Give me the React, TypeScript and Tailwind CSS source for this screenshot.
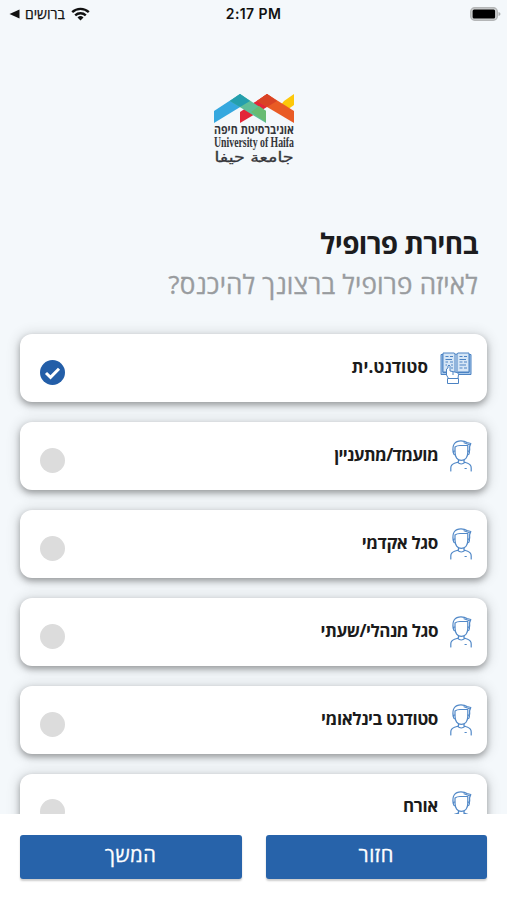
import { useState } from "react";

type IconName = "book" | "person";

interface Profile {
  id: string;
  label: string;
  icon: IconName;
  tracking: string;
}

const profiles: Profile[] = [
  { id: "student", label: "סטודנט.ית", icon: "book", tracking: "tracking-[0.05px]" },
  { id: "candidate", label: "מועמד/מתעניין", icon: "person", tracking: "tracking-[-0.65px]" },
  { id: "academic", label: "סגל אקדמי", icon: "person", tracking: "tracking-[-0.4px]" },
  { id: "staff", label: "סגל מנהלי/שעתי", icon: "person", tracking: "tracking-[-0.5px]" },
  { id: "international", label: "סטודנט בינלאומי", icon: "person", tracking: "tracking-[-0.4px]" },
  { id: "guest", label: "אורח", icon: "person", tracking: "tracking-[-0.35px]" },
];

const button =
  "h-[44px] flex-1 rounded-[3px] bg-[#2763aa] pb-[5px] text-[20px] leading-[39px] tracking-[0.6px] text-white [-webkit-text-stroke:0.35px] shadow-[0_2px_2px_rgba(0,0,0,0.2)]";

function StatusBar() {
  return (
    <div dir="ltr" className="grid h-[28px] shrink-0 grid-cols-3 items-center text-[#111]">
      <div className="flex items-center pl-[9px]">
        <svg width="11" height="10" viewBox="0 0 11 10"><path d="M.5 5 10.5 .4v9.2Z" fill="#111" /></svg>
        <span className="ml-[5px] text-[14px] leading-[20px] [-webkit-text-stroke:0.25px]">ברושים</span>
        <svg className="ml-[6px]" width="19" height="14" viewBox="0 0 19 14" fill="none" stroke="#111" strokeWidth="2.4">
          <path d="M1.2 5.2a12 12 0 0 1 16.6 0" />
          <path d="M4.2 8.3a7.8 7.8 0 0 1 10.6 0" />
          <path d="m9.5 13.5-3-3a4.4 4.4 0 0 1 6 0Z" fill="#111" stroke="none" />
        </svg>
      </div>
      <div className="text-center font-[Inter] text-[14px] leading-[20px] font-semibold tracking-[0.4px]">2:17 PM</div>
      <svg className="mr-[6px] justify-self-end" width="31" height="14" viewBox="0 0 31 14">
        <rect x=".7" y=".7" width="26.6" height="12.6" rx="4" fill="#d0d2d3" stroke="#b4b6b7" strokeWidth="1.4" />
        <rect x="2.6" y="2.4" width="22.5" height="9.2" rx="1.5" fill="#000" />
        <path d="M28.5 5v4q2-.5 2-2t-2-2Z" fill="#adafb0" />
      </svg>
    </div>
  );
}

function Logo() {
  return (
    <div className="mx-auto h-[76px] w-[82px]">
      <svg width="82" height="30" viewBox="0 0 82 30" className="block">
        <path d="m1 17 26-17 10 7L1 29Z" fill="#35a8df" />
        <path d="m71 7 10-7v11l-7 5-7-4Z" fill="#fdc80a" />
        <path d="M27 29V18L54 0l10 7Z" fill="#e32638" />
        <path d="m54 0 27 17v12L44 7Z" fill="#e95b25" />
        <path d="m27 0 26 17v12L17 7Z" fill="#5fbe98" />
        <path d="m27 0 10 7-10 6-10-6Z" fill="#249fae" />
        <path d="m54 0 10 7-10 6-10-6Z" fill="#d94325" />
        <path d="m53 17-7-5-8 6 15 10Z" fill="#68bb72" />
      </svg>
      <svg width="82" height="46" viewBox="0 30 82 46" className="block overflow-visible" fill="#35363a" textAnchor="middle">
        <text x="41" y="39.5" fontFamily="'Open Sans', sans-serif" fontSize="12.5" fontWeight="700" textLength="80" lengthAdjust="spacingAndGlyphs">אוניברסיטת חיפה</text>
        <text x="41" y="52.5" fontFamily="'Liberation Serif', serif" fontSize="14" fontWeight="700" textLength="80" lengthAdjust="spacingAndGlyphs">University of Haifa</text>
        <text x="41" y="68" fontFamily="'DejaVu Sans', sans-serif" fontSize="14" stroke="#35363a" strokeWidth=".3" textLength="79" lengthAdjust="spacingAndGlyphs">جامعة حيفا</text>
      </svg>
    </div>
  );
}

function BookIcon() {
  return (
    <svg width="32" height="32" viewBox="0 0 32 32" fill="none" stroke="#4c83c3" strokeWidth="1">
      <path d="M7 22.5H1V2.5h2v18h4M13 22.5h18V2.5h-2v18H13" fill="#a9c9eb" />
      <path d="M7 20H3V1h11l2 1.5L18 1h11v19H18l-2 1.5-2-1.5" fill="#d6e6f6" />
      <path d="M15 2v19M17 2v19" />
      <path d="M5.5 4.5h3M10 4.5h3M5.5 7.5H12M5.5 10H8M10 10h3M5.5 13H7M11 13h2M11 16h2M19.5 4.5h3M24 4.5h3M19.5 7.5H26M19.5 10h3M24 10h3M19.5 13H26M19.5 16h3M24 16h3" />
      <path d="M8.5 26.5 6.5 23v-6l1.5-1V14q1-2 2 0v5l7 1.5q1.5.5 1.5 2l-.5 4Z" fill="#fff" />
      <path d="M13 20v3M7.5 26.5h11v5h-11Z" fill="#fff" />
    </svg>
  );
}

function PersonIcon() {
  return (
    <svg width="22" height="32" viewBox="0 0 22 32" fill="none" stroke="#5289c8" strokeWidth="1.2" strokeLinecap="round" strokeLinejoin="round">
      <path d="M3.2 12C2 5 4.8 .8 11 .8c2.800 0 4.500.6 6 1.700l3.800 1-1.200 3.300c.3 2 .1 3.500-.5 5.200" />
      <path d="M5 7q2-1.500 5-1.500h7.800V12c0 5-2.500 8.300-6.500 8.300S5 17 5 12Z" />
      <path d="M4.800 11q-1.700 0-1.500 1.800.2 2 2 2.200M17.900 11q1.700 0 1.500 1.800-.2 2-2 2.200M14 2.800l5.500 2" />
      <path d="M8.500 20V22L4.500 23.200Q.8 24.500 .8 28V31M14 20V22l3.700 1.200q3.500 1.300 3.500 4.800V31M7.500 22.400q3.700 3.200 7.500 0M15 28.500h1.300" />
    </svg>
  );
}

function RadioMark({ checked }: { checked: boolean }) {
  return (
    <span className={`mt-[9px] flex size-[25px] items-center justify-center rounded-full ${checked ? "bg-[#235ea8]" : "bg-[#dcdcdc]"}`}>
      {checked && (
        <svg width="17" height="14" viewBox="0 0 17 14" fill="none" stroke="#fff" strokeWidth="3">
          <path d="m2 7 4.5 4.3 8.5-8.6" />
        </svg>
      )}
    </span>
  );
}

export default function App() {
  const [selected, setSelected] = useState("student");

  return (
    <main dir="rtl" className="flex h-[900px] w-full flex-col overflow-hidden bg-[#f4f8fb] font-['Open_Sans',sans-serif]">
      <StatusBar />
      <header className="shrink-0 pt-[66px]">
        <Logo />
        <div className="h-[144px] px-[29px] pt-[54px]">
          <h1 className="text-[28px] leading-[38px] font-bold tracking-[-0.65px] whitespace-nowrap text-[#1c1c1e]">בחירת פרופיל</h1>
          <p className="mt-[3px] text-[26px] leading-[38px] tracking-[0.2px] whitespace-nowrap text-[#999c9f] [-webkit-text-stroke:0.35px]">לאיזה פרופיל ברצונך להיכנס?</p>
        </div>
      </header>

      <section className="flex min-h-0 flex-1 flex-col gap-[20px] overflow-hidden px-[20px] pt-[20px]">
        {profiles.map((p) => (
          <button
            key={p.id}
            type="button"
            onClick={() => setSelected(p.id)}
            className="flex h-[68px] shrink-0 items-center justify-between rounded-[12px] bg-white pr-[15px] pl-[20px] shadow-[0_3px_6px_rgba(0,0,0,0.32),0_1px_12px_4px_rgba(0,0,0,0.09)] last:h-[65px]"
          >
            <span className="flex items-center gap-[12px]">
              {p.icon === "book" ? <BookIcon /> : <PersonIcon />}
              <span className={`pb-[2px] text-[17px] leading-[24px] font-bold whitespace-nowrap text-[#1b1b1b] ${p.tracking}`}>{p.label}</span>
            </span>
            <RadioMark checked={selected === p.id} />
          </button>
        ))}
      </section>

      <footer className="flex h-[86px] shrink-0 gap-[24px] bg-white px-[20px] pt-[21px]">
        <button type="button" className={button}>חזור</button>
        <button type="button" className={button}>המשך</button>
      </footer>
    </main>
  );
}
